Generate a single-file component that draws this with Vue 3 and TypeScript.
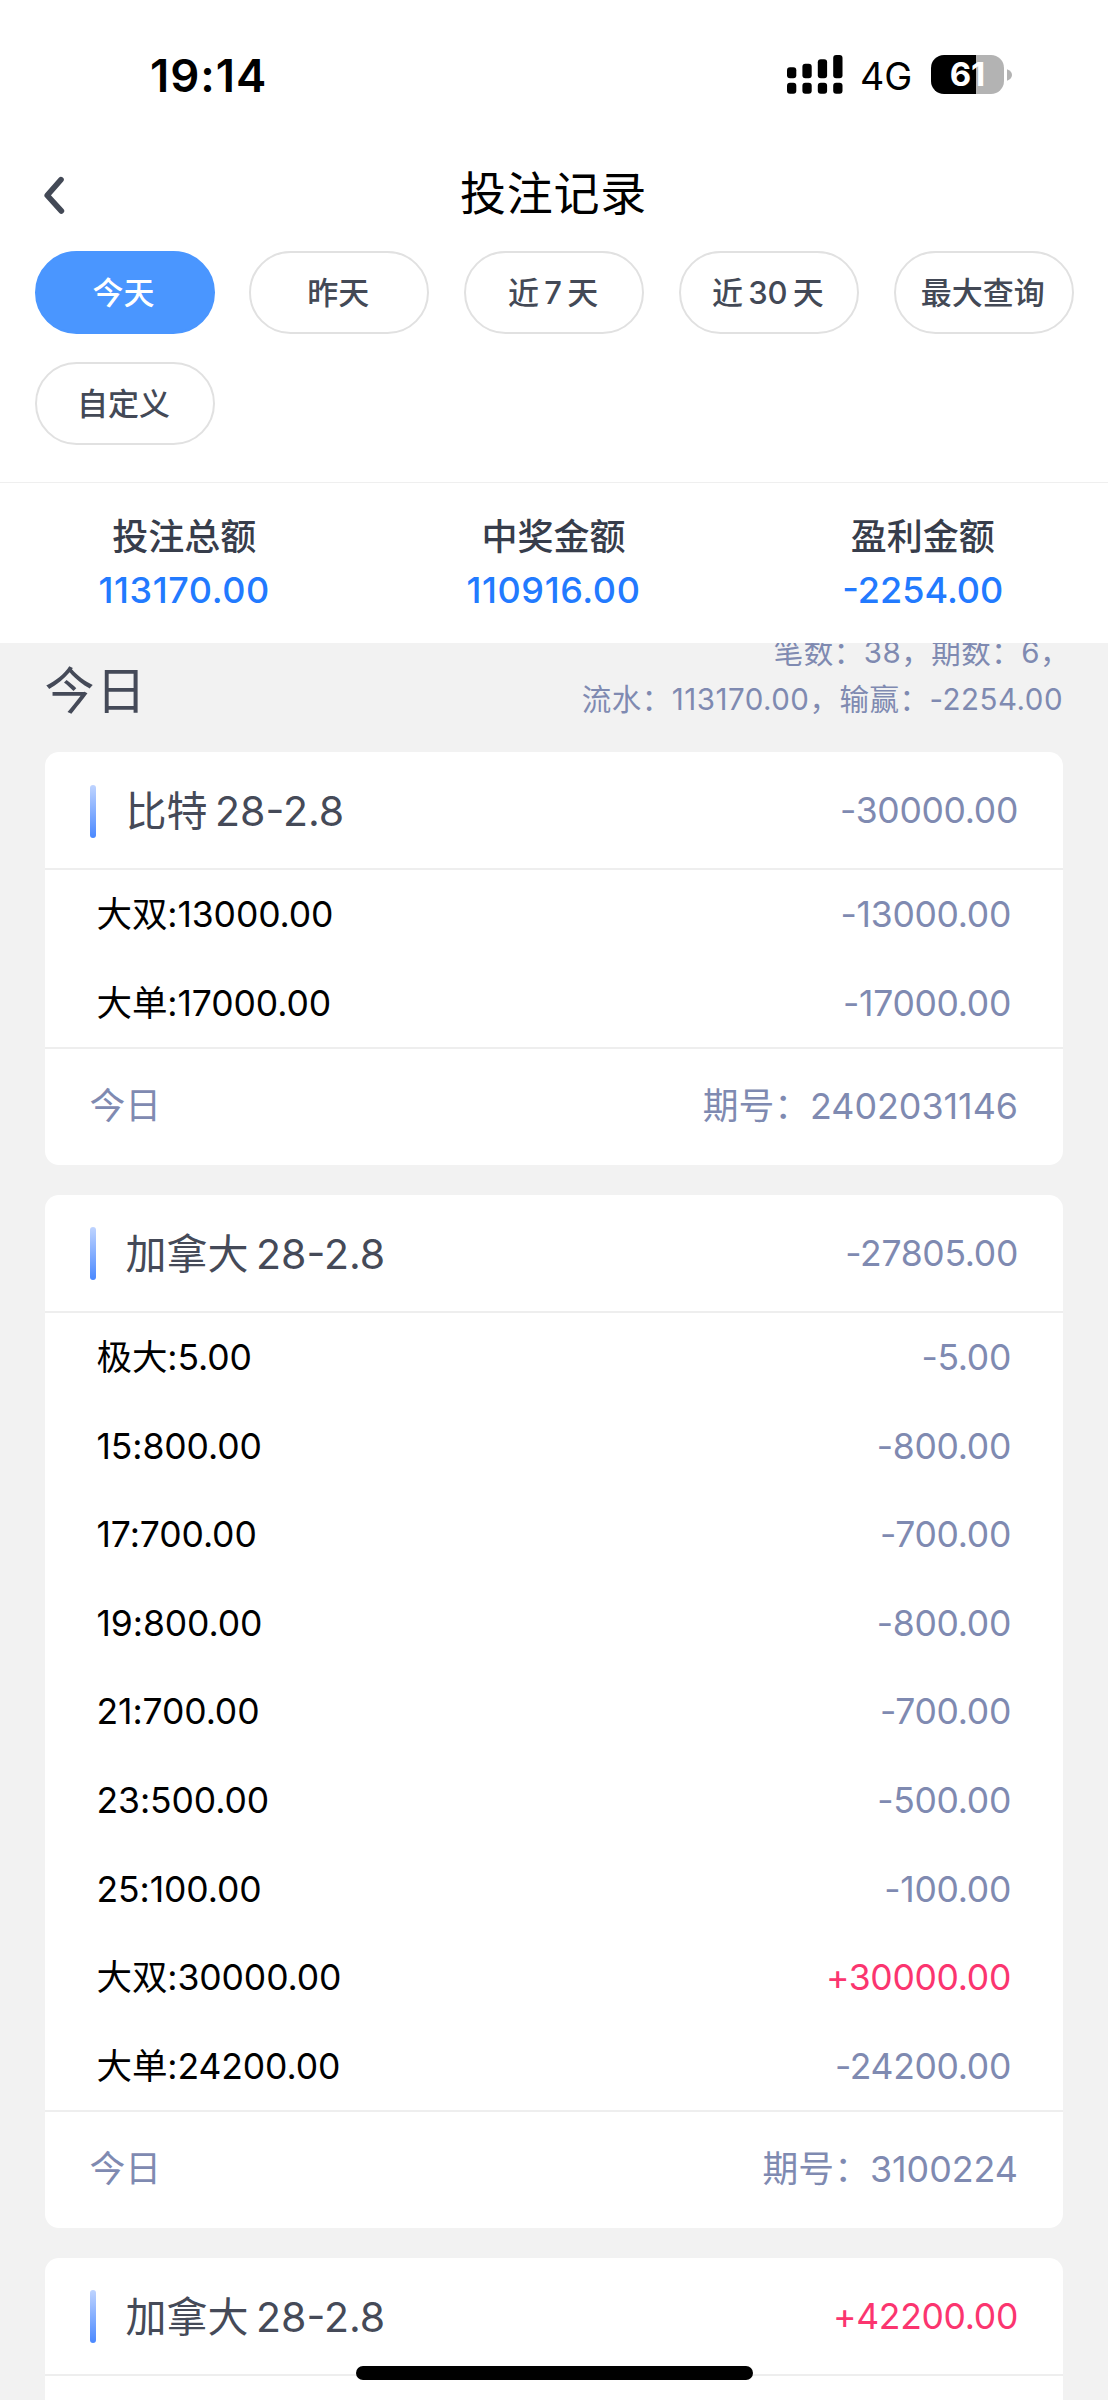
<script setup lang="ts">
interface Bet {
  label: string
  amount: string
}

interface BetRecord {
  title: string
  total: string
  bets: Bet[]
  issue?: string
}

const ranges: string[] = ['今天', '昨天', '近 7 天', '近 30 天', '最大查询', '自定义']

const totals: Bet[] = [
  { label: '投注总额', amount: '113170.00' },
  { label: '中奖金额', amount: '110916.00' },
  { label: '盈利金额', amount: '-2254.00' },
]

const records: BetRecord[] = [
  {
    title: '比特 28-2.8',
    total: '-30000.00',
    bets: [
      { label: '大双:13000.00', amount: '-13000.00' },
      { label: '大单:17000.00', amount: '-17000.00' },
    ],
    issue: '2402031146',
  },
  {
    title: '加拿大 28-2.8',
    total: '-27805.00',
    bets: [
      { label: '极大:5.00', amount: '-5.00' },
      { label: '15:800.00', amount: '-800.00' },
      { label: '17:700.00', amount: '-700.00' },
      { label: '19:800.00', amount: '-800.00' },
      { label: '21:700.00', amount: '-700.00' },
      { label: '23:500.00', amount: '-500.00' },
      { label: '25:100.00', amount: '-100.00' },
      { label: '大双:30000.00', amount: '+30000.00' },
      { label: '大单:24200.00', amount: '-24200.00' },
    ],
    issue: '3100224',
  },
  { title: '加拿大 28-2.8', total: '+42200.00', bets: [] },
]

const isWin = (amount: string): boolean => amount.startsWith('+')
</script>

<template>
  <div class="screen">
    <header class="top">
      <div class="status">
        <span class="clock">19:14</span>
        <div class="status-right">
          <svg class="signal" width="56" height="39" viewBox="0 0 56 39">
            <rect x="0" y="12.3" width="9.3" height="11" rx="3" />
            <rect x="15.4" y="8.7" width="9.3" height="14.6" rx="3" />
            <rect x="30.8" y="4.3" width="9.3" height="19" rx="3" />
            <rect x="46.2" y="0" width="9.3" height="23.3" rx="3" />
            <rect x="0" y="27.8" width="9.3" height="10.9" rx="3" />
            <rect x="15.4" y="27.8" width="9.3" height="10.9" rx="3" />
            <rect x="30.8" y="27.8" width="9.3" height="10.9" rx="3" />
            <rect x="46.2" y="27.8" width="9.3" height="10.9" rx="3" />
          </svg>
          <span class="network">4G</span>
          <div class="battery">
            <span class="battery-body">61</span>
            <svg class="battery-cap" width="5" height="12" viewBox="0 0 5 12">
              <path d="M0 0.3C3 1.3 5 3.4 5 6S3 10.7 0 11.7Z" />
            </svg>
          </div>
        </div>
      </div>

      <div class="nav">
        <svg class="back" width="22" height="40" viewBox="0 0 22 40">
          <path d="M18 4.6 4.2 20.4 18.4 36" />
        </svg>
        <h1>投注记录</h1>
      </div>

      <div class="ranges">
        <button
          v-for="(range, i) in ranges"
          :key="range"
          type="button"
          class="pill"
          :class="{ active: i === 0 }"
        >{{ range }}</button>
      </div>

      <div class="totals">
        <div v-for="t in totals" :key="t.label" class="total">
          <span class="total-label">{{ t.label }}</span>
          <span class="total-value">{{ t.amount }}</span>
        </div>
      </div>
    </header>

    <main class="list">
      <div class="group">
        <h2>今日</h2>
        <div class="stats">
          <div class="stats-first">笔数：38，期数：6，</div>
          <div>流水：113170.00，输赢：-2254.00</div>
        </div>
      </div>

      <section v-for="(r, i) in records" :key="i" class="card">
        <div class="card-head">
          <i class="bar"></i>
          <span class="card-title">{{ r.title }}</span>
          <span class="amount" :class="{ win: isWin(r.total) }">{{ r.total }}</span>
        </div>
        <div v-for="b in r.bets" :key="b.label" class="bet">
          <span>{{ b.label }}</span>
          <span class="amount" :class="{ win: isWin(b.amount) }">{{ b.amount }}</span>
        </div>
        <div v-if="r.issue" class="card-foot">
          <span>今日</span>
          <span>期号：{{ r.issue }}</span>
        </div>
      </section>
    </main>

    <div class="home-indicator"></div>
  </div>
</template>

<style>
body {
  margin: 0;
  background: #f2f2f2;
}
</style>

<style scoped>
.screen {
  position: relative;
  display: flex;
  flex-direction: column;
  width: 1108px;
  height: 2400px;
  overflow: hidden;
  background: #f2f2f2;
  color: #000;
  font-family: Inter, "Noto Sans CJK SC", sans-serif;
  font-size: 36px;
  line-height: 44px;
}

.top {
  display: flex;
  flex-direction: column;
  flex: none;
  height: 643px;
  background: #fff;
}

.status {
  display: flex;
  align-items: center;
  justify-content: space-between;
  height: 149px;
  padding: 0 96px 0 150px;
}

.clock {
  margin-top: 2px;
  font-size: 45.5px;
  font-weight: 600;
  line-height: 54px;
  letter-spacing: 1px;
}

.status-right {
  display: flex;
  align-items: center;
}

.signal {
  display: block;
}

.network {
  width: 52px;
  margin: 4px 0 0 17px;
  font-size: 37.5px;
  line-height: 38px;
}

.battery {
  display: flex;
  align-items: center;
  margin-left: 19px;
}

.battery-body {
  width: 73px;
  height: 39px;
  border-radius: 13px;
  background: linear-gradient(90deg, #000 0 61%, #b3b3b3 61%);
  color: #fff;
  font-size: 33px;
  font-weight: 700;
  line-height: 39px;
  text-align: center;
}

.battery-cap {
  margin-left: 3px;
  fill: #b3b3b3;
}

.nav {
  display: flex;
  align-items: center;
  height: 92px;
  padding: 0 43px;
}

.back {
  flex: none;
  fill: none;
  stroke: #434956;
  stroke-width: 5.6;
  stroke-linecap: round;
  stroke-linejoin: round;
}

h1 {
  flex: 1;
  margin: -4px 23px 0 0;
  font-size: 46px;
  font-weight: 400;
  line-height: 60px;
  letter-spacing: 0.7px;
  text-align: center;
}

.ranges {
  display: flex;
  flex-wrap: wrap;
  gap: 28px 34.8px;
  padding: 10px 34px 37px 34.5px;
}

.pill {
  box-sizing: border-box;
  width: 180px;
  height: 83px;
  padding: 0 2px 0 0;
  border: 2.5px solid #e1e1e1;
  border-radius: 42px;
  background: #fff;
  color: #434956;
  font-family: inherit;
  font-size: 31px;
  font-weight: 500;
  line-height: 38px;
  word-spacing: -3px;
  white-space: nowrap;
}

.pill.active {
  border-color: #4a96ff;
  background: #4a96ff;
  color: #fff;
}

.totals {
  display: flex;
  flex: 1;
  border-top: 1px solid #efefef;
}

.total {
  display: flex;
  flex: 1;
  flex-direction: column;
  align-items: center;
  padding: 28px 1px 0 0;
}

.total-label {
  color: #373d4b;
  font-weight: 500;
  line-height: 52px;
}

.total-value {
  margin-top: 1px;
  color: #227aff;
  font-weight: 500;
  line-height: 52px;
}

.total:nth-child(-n + 2) .total-value {
  letter-spacing: 0.6px;
}

.list {
  flex: 1;
  overflow: hidden;
}

.group {
  display: flex;
  justify-content: space-between;
  height: 124px;
  margin-top: -15px;
  padding: 0 45px 0 44.5px;
}

h2 {
  margin: 17px 0 0;
  color: #454a58;
  font-size: 50px;
  font-weight: 400;
  line-height: 93px;
  letter-spacing: 1.5px;
}

.stats {
  padding-top: 1px;
  color: #7f8ab1;
  font-size: 29.5px;
  line-height: 46.7px;
  letter-spacing: 0.5px;
  text-align: right;
}

.stats-first {
  margin-right: -7px;
}

.card {
  margin: 0 45px 29.5px;
  min-height: 200px;
  overflow: hidden;
  border-radius: 14px;
  background: #fff;
}

.card-head,
.card-foot {
  box-sizing: border-box;
  display: flex;
  align-items: center;
  height: 118px;
  padding: 2px 45px 0 44.5px;
}

.card-head {
  border-bottom: 2px solid #eee;
}

.bar {
  width: 6px;
  height: 53px;
  border-radius: 3px;
  background: linear-gradient(#bfd4ff, #4a88ff);
}

.card-title {
  flex: 1;
  margin-left: 30px;
  color: #454a58;
  font-size: 41px;
  word-spacing: -4px;
}

.amount {
  color: #7f8ab1;
  font-size: 35.5px;
  letter-spacing: -0.3px;
}

.amount.win {
  color: #fb356f;
}

.bet {
  box-sizing: border-box;
  display: flex;
  align-items: center;
  justify-content: space-between;
  height: 88.6px;
  padding: 2px 52px 0 51.5px;
  font-size: 35.5px;
  letter-spacing: -0.1px;
}

.card-foot {
  justify-content: space-between;
  padding-top: 0;
  padding-bottom: 2px;
  border-top: 2px solid #eee;
  color: #7f8ab1;
  font-size: 35.8px;
}

.home-indicator {
  position: absolute;
  bottom: 20.5px;
  left: 355.5px;
  width: 397px;
  height: 13.5px;
  border-radius: 7px;
  background: #000;
}
</style>
